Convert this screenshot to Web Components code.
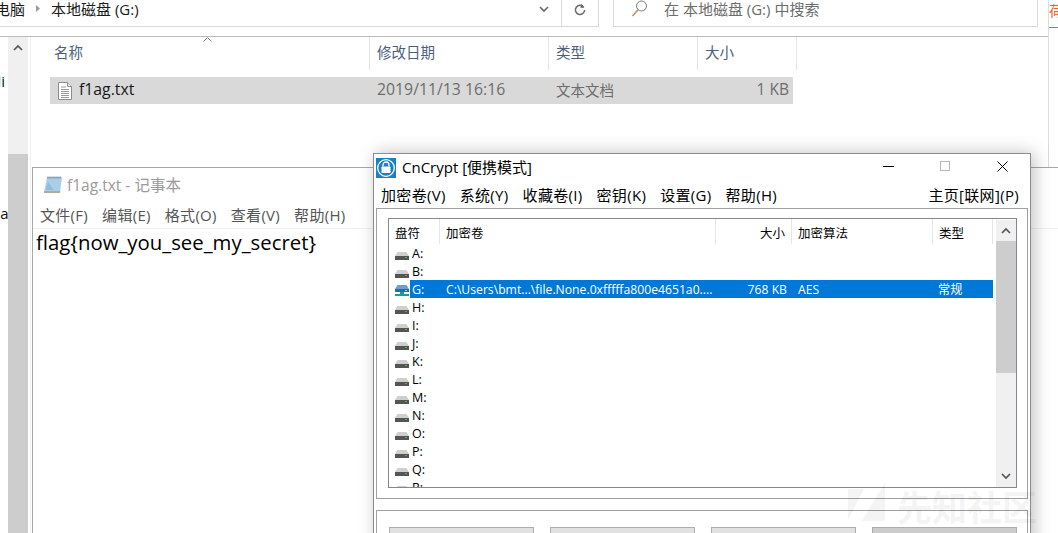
<!DOCTYPE html>
<html lang="zh">
<head>
<meta charset="utf-8">
<title>CnCrypt</title>
<style>
  html, body { margin: 0; height: 100%; overflow: hidden; background: #fff; }
</style>
</head>
<body>
<desk-top>
  <explorer-window></explorer-window>
  <notepad-window></notepad-window>
  <cncrypt-window></cncrypt-window>
  <site-mark></site-mark>
</desk-top>

<script>
  'use strict';

  const FONT = '"Open Sans", "Noto Sans CJK SC", sans-serif';

  // drive icon, the mounted one is blue
  const driveIcon = (mounted) => {
    if (mounted) {
      return `<svg width="14" height="16" viewBox="0 0 14 16">
        <path d="M2.500 4h9L14 8H0z" fill="#6f9fd0"/>
        <rect y="8" width="14" height="3" fill="#1f6fae"/>
        <rect x="10" y="9" width="2" height="1" fill="#7fe0d0"/>
        <path d="M5 11h4v2h5v2H0v-2h5z" fill="#1d9a94"/>
      </svg>`;
    }
    return `<svg width="14" height="16" viewBox="0 0 14 16">
      <path d="M2.500 7h9L14 11H0z" fill="#cfcfcf"/>
      <rect y="11" width="14" height="4" fill="#555"/>
      <rect x="10" y="12" width="2" height="1" fill="#35c335"/>
    </svg>`;
  };

  class DeskTop extends HTMLElement {
    constructor() {
      super();
      this.attachShadow({mode: 'open'});
      this.shadowRoot.innerHTML = `
      <style>
        :host {
          display: block;
          position: relative;
          width: 1058px;
          height: 533px;
          overflow: hidden;
          background: #fff;
          font-family: ${FONT};
        }
        .wallpaper {
          position: absolute;
          left: 1049px;
          top: 0;
          width: 9px;
          height: 27px;
          overflow: hidden;
          border-bottom: 1px solid #f0622d;
          color: #e8632f;
          font: 14px "Noto Sans CJK SC", sans-serif;
        }
      </style>
      <div class="wallpaper">荷</div>
      <slot></slot>
    `;
    }
  }

  class ExplorerWindow extends HTMLElement {
    constructor() {
      super();
      this.attachShadow({mode: 'open'});
      this.shadowRoot.innerHTML = `
      <style>
        :host {
          display: flex;
          flex-direction: column;
          position: absolute;
          left: 0;
          top: 0;
          width: 1048px;
          height: 533px;
          background: #fff;
          border-right: 1px solid #dcdcdc;
          font-size: 14px;
        }
        .toolbar {
          display: flex;
          height: 27px;
          flex: none;
        }
        .address {
          display: flex;
          align-items: center;
          width: 599px;
          flex: none;
          box-sizing: border-box;
          border: solid #d9d9d9;
          border-width: 0 1px 1px 0;
          overflow: hidden;
        }
        .path {
          display: flex;
          align-items: center;
          flex: 1;
          min-width: 0;
          height: 100%;
          padding-bottom: 9px;
          box-sizing: border-box;
          color: #1a1a1a;
          font-size: 15px;
          white-space: nowrap;
        }
        .crumb { margin-left: -5px; }
        .sep { margin: 0 0 0 9px; width: 8px; height: 9px; flex: none; }
        .disk { margin-left: 9px; }
        .btn {
          display: flex;
          align-items: center;
          justify-content: center;
          height: 100%;
          padding-bottom: 8px;
          box-sizing: border-box;
          flex: none;
        }
        .down { width: 36px; border-right: 1px solid #d9d9d9; }
        .refresh { width: 36px; }
        .search {
          display: flex;
          align-items: center;
          margin-left: 14px;
          width: 425px;
          flex: none;
          box-sizing: border-box;
          border: solid #d9d9d9;
          border-width: 0 1px 1px;
          color: #6d6d6d;
          font-size: 15px;
          white-space: nowrap;
          padding-bottom: 10px;
        }
        .search svg { margin: 0 0 0 17px; flex: none; }
        .search span { margin-left: 16px; }
        .body {
          display: flex;
          flex: 1;
          margin-top: 9px;
          border-top: 1px solid #bcbcbc;
          min-height: 0;
        }
        .nav {
          width: 8px;
          flex: none;
          position: relative;
          overflow: hidden;
          font-size: 15px;
          color: #111;
        }
        .nav i { position: absolute; font-style: normal; white-space: nowrap; }
        .bar {
          width: 20px;
          flex: none;
          display: flex;
          flex-direction: column;
          background: #f0f0f0;
        }
        .bar .arrow { height: 20px; display: flex; align-items: center; justify-content: center; }
        .bar .track { height: 97px; }
        .bar .thumb { flex: 1; background: #cdcdcd; }
        .files {
          flex: 1;
          margin-left: 2px;
          padding-left: 20px;
          border-left: 1px solid #f0f0f0;
          position: relative;
        }
        .sort { position: absolute; left: 172px; top: 0; }
        .row {
          display: grid;
          grid-template-columns: 320px 179px 149px 99px;
          margin-left: -1px;
          width: 747px;
        }
        .head { height: 33px; color: #4c607a; font-size: 14.500px; margin-bottom: 7px; }
        .head div {
          border-right: 1px solid #e5e5e5;
          padding: 4px 0 0 7px;
          box-sizing: border-box;
          height: 33px;
        }
        .head div:first-child { padding-left: 4px; }
        .item {
          height: 27px;
          width: 743px;
          grid-template-columns: 320px 179px 149px 95px;
          background: #d9d9d9;
          align-items: center;
          color: #6d6d6d;
          font-size: 15.800px;
          padding-bottom: 3px;
          box-sizing: border-box;
        }
        .name { display: flex; align-items: center; color: #1a1a1a; padding-left: 8px; font-size: 15.800px; }
        .name svg { margin: 3px 7px 0 0; flex: none; }
        .date, .type { padding-left: 7px; }
        .type { font-size: 14.500px; }
        .size { text-align: right; padding-right: 4px; font-size: 15.500px; }
      </style>
      <div class="toolbar">
        <div class="address">
          <div class="path">
            <span class="crumb">电脑</span>
            <svg class="sep" viewBox="0 0 8 9"><path d="M2 1l4 3.500L2 8z" fill="#9a9a9a"/></svg>
            <span class="disk">本地磁盘 (G:)</span>
          </div>
          <div class="btn down">
            <svg width="10" height="7" viewBox="0 0 10 7"><path d="M1 1l4 4 4-4" fill="none" stroke="#6a6a6a" stroke-width="1.700"/></svg>
          </div>
          <div class="btn refresh">
            <svg width="12" height="13" viewBox="0 0 12 13"><path d="M9.700 4.200A4.600 4.600 0 1 0 10.600 7" fill="none" stroke="#6a6a6a" stroke-width="1.500"/><path d="M7 .8l3.300 3.600-3.800.6z" fill="#6a6a6a"/></svg>
          </div>
        </div>
        <div class="search">
          <svg width="17" height="17" viewBox="0 0 17 17"><circle cx="10.500" cy="6" r="5" fill="none" stroke="#7a7a7a"/><path d="M7 9.700L1.500 16" stroke="#b98a4a" stroke-width="1.400"/></svg>
          <span>在 本地磁盘 (G:) 中搜索</span>
        </div>
      </div>
      <div class="body">
        <div class="nav"><i style="top:34px;left:-8px">di</i><i style="top:166px;left:-9px">na</i></div>
        <div class="bar">
          <div class="arrow"><svg width="10" height="7" viewBox="0 0 10 7"><path d="M1 6l4-4 4 4" fill="none" stroke="#555" stroke-width="1.700"/></svg></div>
          <div class="track"></div>
          <div class="thumb"></div>
        </div>
        <div class="files">
          <svg class="sort" width="9" height="5" viewBox="0 0 9 5"><path d="M.5 4.500l4-4 4 4" fill="none" stroke="#8a8a8a"/></svg>
          <div class="row head"><div>名称</div><div>修改日期</div><div>类型</div><div>大小</div></div>
          <div class="row item">
            <div class="name">
              <svg width="14" height="18" viewBox="0 0 14 18">
                <path d="M.5.500h9l4 4v13H.5z" fill="#fff" stroke="#8c8c8c"/>
                <path d="M9.500.500v4h4" fill="#eee" stroke="#8c8c8c"/>
                <path d="M3 5h5M3 7.500h8M3 9.500h8M3 11.500h8M3 13.500h8M3 15.500h8" stroke="#9a9a9a"/>
              </svg>
              f1ag.txt
            </div>
            <div class="date">2019/11/13 16:16</div>
            <div class="type">文本文档</div>
            <div class="size">1 KB</div>
          </div>
        </div>
      </div>
    `;
    }
  }

  class NotepadWindow extends HTMLElement {
    constructor() {
      super();
      this.attachShadow({mode: 'open'});
      this.shadowRoot.innerHTML = `
      <style>
        :host {
          display: flex;
          flex-direction: column;
          position: absolute;
          left: 32px;
          top: 167px;
          width: 1040px;
          height: 380px;
          box-sizing: border-box;
          background: #fff;
          border: 1px solid #a8a8a8;
          font-size: 15px;
        }
        .title {
          display: flex;
          align-items: center;
          height: 33px;
          padding-left: 10px;
          color: #9a9a9a;
          font-size: 15.500px;
          flex: none;
        }
        .title svg { margin-right: 4px; flex: none; }
        .menu {
          display: flex;
          gap: 14px;
          height: 27px;
          align-items: center;
          padding-left: 7px;
          color: #555;
          letter-spacing: .3px;
          border-bottom: 1px solid #f0f0f0;
          flex: none;
        }
        .text {
          padding-left: 3px;
          color: #000;
          font-size: 20.350px;
          line-height: 26px;
          white-space: pre;
        }
      </style>
      <div class="title">
        <svg width="20" height="20" viewBox="0 0 20 20">
          <path d="M4 2h15l-2 16H1z" fill="#a9cfe6"/>
          <path d="M1 18h16l.3-2H1.300z" fill="#b8a88e"/>
          <path d="M5 1.500v2M7 1.500v2M9 1.500v2M11 1.500v2M13 1.500v2M15 1.500v2M17 1.500v2" stroke="#6c8194"/>
          <path d="M5 7l-2 8h8z" fill="#7fb0d2" opacity=".6"/>
        </svg>
        <span>f1ag.txt - 记事本</span>
      </div>
      <div class="menu">
        <span>文件(F)</span><span>编辑(E)</span><span>格式(O)</span><span>查看(V)</span><span>帮助(H)</span>
      </div>
      <div class="text">flag{now_you_see_my_secret}</div>
    `;
    }
  }

  class DriveRow extends HTMLElement {
    constructor() {
      super();
      this.attachShadow({mode: 'open'});
    }

    connectedCallback() {
      const selected = this.hasAttribute('selected');
      const letter = this.getAttribute('letter');
      this.shadowRoot.innerHTML = `
      <style>
        :host {
          display: grid;
          grid-template-columns: 22px 1fr;
          height: 18px;
          align-items: center;
          font-size: 12.200px;
          color: #000;
          white-space: nowrap;
        }
        .icon { display: flex; width: 14px; }
        .plain { margin-left: -7px; padding-left: 2px; font-size: 12.500px; }
        .sel {
          background: #0078d7;
          color: #fff;
          height: 18px;
          display: flex;
          align-items: center;
          width: 583px;
          margin-left: -7px;
        }
        .sel span { flex: none; }
        .letter { width: 36px; padding-left: 2px; box-sizing: border-box; font-size: 12.500px; }
        .path { width: 276px; }
        .size { width: 65px; text-align: right; }
        .algo { width: 151px; padding-left: 11px; box-sizing: border-box; }
      </style>
      <div class="icon">${driveIcon(selected)}</div>
      ${selected ? `
        <div class="sel">
          <span class="letter">${letter}:</span>
          <span class="path">C:\\Users\\bmt...\\file.None.0xfffffa800e4651a0....</span>
          <span class="size">768 KB</span>
          <span class="algo">AES</span>
          <span>常规</span>
        </div>` : `<div class="plain">${letter}:</div>`}
    `;
    }
  }

  class CncryptWindow extends HTMLElement {
    constructor() {
      super();
      this.attachShadow({mode: 'open'});
      const rows = 'ABGHIJKLMNOPQR'.split('').map(letter =>
        `<drive-row letter="${letter}"${letter === 'G' ? ' selected' : ''}></drive-row>`).join('');
      this.shadowRoot.innerHTML = `
      <style>
        :host {
          display: flex;
          flex-direction: column;
          position: absolute;
          left: 373px;
          top: 153px;
          width: 658px;
          height: 400px;
          box-sizing: border-box;
          background: #fff;
          border: 1px solid #8c8c8c;
          box-shadow: 3px 0 16px rgba(0, 0, 0, .25);
          color: #000;
          font-size: 15px;
        }
        .title {
          display: flex;
          align-items: center;
          height: 24px;
          padding-left: 2px;
          flex: none;
        }
        .title .name { margin-left: 6px; font-size: 15px; flex: 1; white-space: nowrap; }
        .logo { flex: none; margin-top: 4px; }
        .ctl { width: 57px; display: flex; justify-content: center; flex: none; }
        .ctl:nth-last-child(2) { margin-left: -1px; }
        .ctl:last-child { margin-left: 1px; margin-right: -1px; }
        .menu {
          display: flex;
          align-items: center;
          height: 30px;
          padding: 2px 11px 0 7px;
          box-sizing: border-box;
          flex: none;
          white-space: nowrap;
          letter-spacing: .32px;
        }
        .menu span { margin-right: 14px; }
        .menu .right { margin: 0 0 0 auto; }
        .panel {
          flex: none;
          margin: 0 2px 0 2px;
          border: 1px solid #a0a0a0;
          height: 291px;
          box-sizing: border-box;
          padding: 9px 10px 10px 11px;
        }
        .list {
          height: 270px;
          box-sizing: border-box;
          border: 1px solid #828790;
          display: flex;
          overflow: hidden;
          background: #fff;
        }
        .table { width: 605px; flex: none; padding-left: 6px; box-sizing: border-box; overflow: hidden; }
        .head {
          display: grid;
          grid-template-columns: 45px 276px 76px 141px 60px;
          height: 25px;
          font-size: 12.500px;
          align-items: center;
        }
        .head div {
          height: 25px;
          line-height: 29px;
          box-sizing: border-box;
          border-right: 1px solid #e5e5e5;
          padding-left: 6px;
          white-space: nowrap;
        }
        .head div:first-child { padding-left: 0; }
        .head .size { text-align: right; padding: 0 6px 0 0; }
        .scroll {
          width: 20px;
          margin-left: 2px;
          flex: none;
          display: flex;
          flex-direction: column;
          background: #f0f0f0;
          margin-top: 1px;
        }
        .scroll .arrow { height: 21px; display: flex; align-items: center; justify-content: center; flex: none; }
        .scroll .thumb { height: 132px; background: #cdcdcd; flex: none; }
        .scroll .track { flex: 1; }
        .lower {
          margin: 11px 2px 0;
          border: 1px solid #a0a0a0;
          padding: 16px 12px 0;
          height: 60px;
          box-sizing: border-box;
          display: grid;
          grid-template-columns: repeat(4, 145px);
          column-gap: 16px;
        }
        .lower div { height: 30px; background: #e1e1e1; border: 1px solid #adadad; box-sizing: border-box; }
        .lower div:last-child { background: #cccccc; }
      </style>
      <div class="title">
        <svg class="logo" width="20" height="20" viewBox="0 0 20 20">
          <rect width="20" height="20" fill="#1b7fc4"/>
          <circle cx="10" cy="10" r="8.300" fill="none" stroke="#fff" stroke-width="1.300"/>
          <rect x="5.500" y="8.500" width="9" height="6.500" rx=".8" fill="#fff"/>
          <path d="M7 8.500V7a3 3 0 0 1 6 0v1.500" fill="none" stroke="#fff" stroke-width="1.300"/>
        </svg>
        <span class="name">CnCrypt [便携模式]</span>
        <div class="ctl"><svg width="11" height="1"><rect width="11" height="1" fill="#000"/></svg></div>
        <div class="ctl"><svg width="10" height="10"><rect x=".5" y=".5" width="9" height="9" fill="none" stroke="#b5b5b5"/></svg></div>
        <div class="ctl"><svg width="11" height="11" viewBox="0 0 11 11"><path d="M.5.500l10 10M10.500.500l-10 10" stroke="#000"/></svg></div>
      </div>
      <div class="menu">
        <span>加密卷(V)</span><span>系统(Y)</span><span>收藏卷(I)</span><span>密钥(K)</span><span>设置(G)</span><span>帮助(H)</span>
        <span class="right">主页[联网](P)</span>
      </div>
      <div class="panel">
        <div class="list">
          <div class="table">
            <div class="head">
              <div>盘符</div><div>加密卷</div><div class="size">大小</div><div>加密算法</div><div>类型</div>
            </div>
            ${rows}
          </div>
          <div class="scroll">
            <div class="arrow"><svg width="10" height="7" viewBox="0 0 10 7"><path d="M1 6l4-4 4 4" fill="none" stroke="#555" stroke-width="1.700"/></svg></div>
            <div class="thumb"></div>
            <div class="track"></div>
            <div class="arrow"><svg width="10" height="7" viewBox="0 0 10 7"><path d="M1 1l4 4 4-4" fill="none" stroke="#555" stroke-width="1.700"/></svg></div>
          </div>
        </div>
      </div>
      <div class="lower"><div></div><div></div><div></div><div></div></div>
    `;
    }
  }

  // faint watermark lying over the bottom right corner
  class SiteMark extends HTMLElement {
    constructor() {
      super();
      this.attachShadow({mode: 'open'});
      this.shadowRoot.innerHTML = `
      <style>
        :host {
          display: flex;
          align-items: center;
          position: absolute;
          left: 848px;
          top: 482px;
          height: 46px;
          gap: 11px;
          opacity: .04;
          pointer-events: none;
          color: #000;
          font: 700 35px "Noto Sans CJK SC", sans-serif;
          white-space: nowrap;
        }
      </style>
      <svg width="38" height="46" viewBox="0 0 38 46"><path d="M0 7h16L0 38zM37 0v39H14z" fill="#000"/></svg>
      <span>先知社区</span>
    `;
    }
  }

  customElements.define('desk-top', DeskTop);
  customElements.define('explorer-window', ExplorerWindow);
  customElements.define('notepad-window', NotepadWindow);
  customElements.define('drive-row', DriveRow);
  customElements.define('cncrypt-window', CncryptWindow);
  customElements.define('site-mark', SiteMark);
</script>
</body>
</html>
